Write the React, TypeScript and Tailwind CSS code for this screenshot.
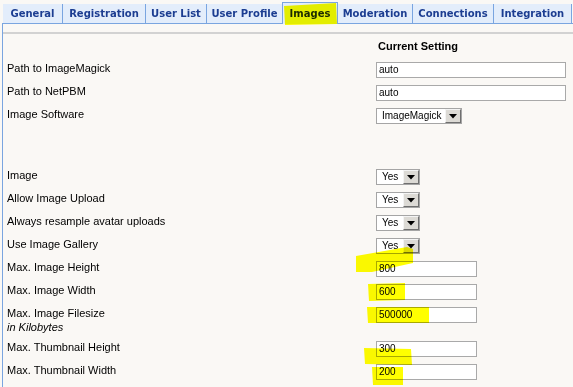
const tabs = [
  { name: "General", w: "w-[60px]" },
  { name: "Registration", w: "w-[83px]" },
  { name: "User List", w: "w-[61px]" },
  { name: "User Profile", w: "w-[75px]" },
  { name: "Images", w: "w-[56px]", active: true },
  { name: "Moderation", w: "w-[75px]" },
  { name: "Connections", w: "w-[81px]" },
  { name: "Integration", w: "w-[78px]" },
]

const Tabs = () => {
  return <div className="flex items-end h-[24px] pl-[1px] border-b border-[#7aa5e0]">
    {tabs.map((t, i) => {
      const beforeActive = tabs[i + 1]?.active
      if (t.active) {
        return <div key={t.name} className={`${t.w} h-[22px] -mb-[1px] pb-[1px] flex items-center justify-center bg-[#e3edfb] border-l border-t border-r border-[#7aa5e0] font-['DejaVu_Sans',Verdana,sans-serif] font-bold text-[10px] text-[#1c2a10]`}>
          {t.name}
        </div>
      }
      return <div key={t.name} className={`${t.w} h-[19px] flex items-center justify-center bg-[#e3edfb] ${beforeActive ? "" : "border-r border-[#7aa5e0]"} font-['DejaVu_Sans',Verdana,sans-serif] font-bold text-[10px] text-[#1c3d91]`}>
        {t.name}
      </div>
    })}
  </div>
}

const TextBox = ({ value, wide }: { value: string, wide?: boolean }) => {
  return <div className={`${wide ? "w-[190px]" : "w-[101px]"} h-[16px] mt-[4px] border border-[#a9a9a9] bg-white text-[10px] leading-[14px] pl-[2px]`}>
    {value}
  </div>
}

const Select = ({ value, w }: { value: string, w: string }) => {
  return <div className={`${w} h-[16px] mt-[4px] flex items-center justify-between border border-[#a5a5a5] bg-white`}>
    <span className="text-[10px] leading-[14px] pl-[5px]">{value}</span>
    <span className="w-[16px] h-[14px] mr-[0px] flex items-center justify-center bg-[#dcdad5] border border-t-[#f4f4f4] border-l-[#f4f4f4] border-r-[#6f6f6f] border-b-[#6f6f6f]">
      <svg width="8" height="5" viewBox="0 0 8 5"><polygon points="0,0 8,0 4,4.5" fill="#000" /></svg>
    </span>
  </div>
}

const Row = ({ label, sub, children }: { label: string, sub?: string, children: React.ReactNode }) => {
  return <div className={`flex ${sub ? "h-[34px]" : "h-[23px]"}`}>
    <div className="w-[373px] pl-[4px] pt-[3px] text-[11px] leading-[14px]">
      <div>{label}</div>
      {sub && <div className="italic">{sub}</div>}
    </div>
    <div>{children}</div>
  </div>
}

const Highlights = () => {
  return <svg className="absolute inset-0 pointer-events-none mix-blend-multiply" width="573" height="387">
    <g fill="#ffff00">
      <polygon points="284,6 336,3 337,24 285,25" />
      <polygon points="356,256 407,247 413,249 413,263 372,272 356,272" />
      <polygon points="368,284 405,283 405,300 369,301" />
      <polygon points="367,307 429,307 429,323 368,323" />
      <polygon points="364,348 411,349 412,365 365,364" />
      <polygon points="372,367 403,367 403,385 373,385" />
    </g>
  </svg>
}

const App = () => {
  return <div className="relative w-[573px] h-[387px] overflow-hidden bg-[#faf8f5] text-black font-['Liberation_Sans',Arial,sans-serif]">
    <div className="ml-[2px]">
      <Tabs />
      <div className="border-l border-[#7aa5e0] h-[363px] pt-[8px]">
        <div className="h-[2px] bg-[#d2d2d2]" />
        <div className="flex h-[24px] items-center">
          <div className="w-[373px]" />
          <div className="pl-[2px] text-[11px] font-bold">Current Setting</div>
        </div>
        <Row label="Path to ImageMagick"><TextBox value="auto" wide /></Row>
        <Row label="Path to NetPBM"><TextBox value="auto" wide /></Row>
        <Row label="Image Software"><Select value="ImageMagick" w="w-[86px]" /></Row>
        <div className="h-[38px]" />
        <Row label="Image"><Select value="Yes" w="w-[44px]" /></Row>
        <Row label="Allow Image Upload"><Select value="Yes" w="w-[44px]" /></Row>
        <Row label="Always resample avatar uploads"><Select value="Yes" w="w-[44px]" /></Row>
        <Row label="Use Image Gallery"><Select value="Yes" w="w-[44px]" /></Row>
        <Row label="Max. Image Height"><TextBox value="800" /></Row>
        <Row label="Max. Image Width"><TextBox value="600" /></Row>
        <Row label="Max. Image Filesize" sub="in Kilobytes"><TextBox value="500000" /></Row>
        <Row label="Max. Thumbnail Height"><TextBox value="300" /></Row>
        <Row label="Max. Thumbnail Width"><TextBox value="200" /></Row>
      </div>
    </div>
    <Highlights />
  </div>
}

export default App
